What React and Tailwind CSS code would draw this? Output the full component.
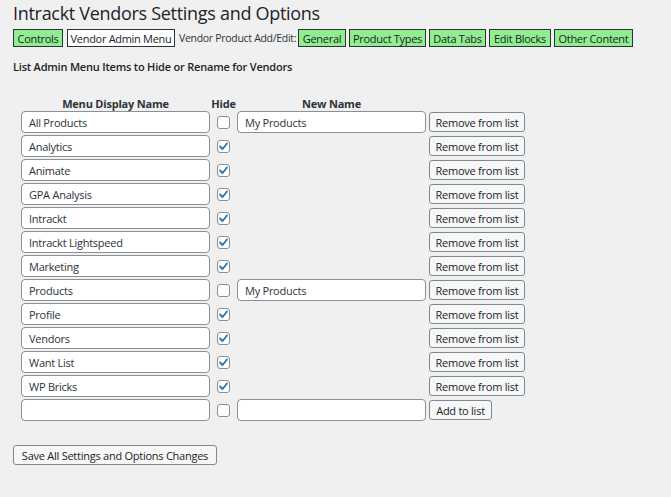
import React from "react";

const items = [
  { name: "All Products", hide: false, newName: "My Products" },
  { name: "Analytics", hide: true },
  { name: "Animate", hide: true },
  { name: "GPA Analysis", hide: true },
  { name: "Intrackt", hide: true },
  { name: "Intrackt Lightspeed", hide: true },
  { name: "Marketing", hide: true },
  { name: "Products", hide: false, newName: "My Products" },
  { name: "Profile", hide: true },
  { name: "Vendors", hide: true },
  { name: "Want List", hide: true },
  { name: "WP Bricks", hide: true },
];

function Checkbox({ checked }) {
  return (
    <div className="w-[13px] h-[13px] border border-[#8c8f94] rounded-[3px] bg-white flex items-center justify-center">
      {checked && (
        <svg width="11" height="11" viewBox="0 0 11 11">
          <path d="M2 5.5 L4.5 8 L9 2.5" fill="none" stroke="#2271b1" strokeWidth="1.8" strokeLinecap="round" strokeLinejoin="round" />
        </svg>
      )}
    </div>
  );
}

function TextInput({ value }) {
  return (
    <div className="w-[189px] h-[22px] border border-[#8c8f94] rounded-[4px] bg-white px-[7px] flex items-center text-[11px] tracking-[-0.25px] text-[#2c3338] leading-none">
      {value}
    </div>
  );
}

function Btn({ w, children }) {
  return (
    <div className={`${w} h-[20px] border border-[#7e8993] rounded-[3px] bg-[#f6f7f7] flex items-center justify-center text-[11px] tracking-[-0.25px] text-[#1d2327] leading-none whitespace-nowrap`}>
      {children}
    </div>
  );
}

function Tab({ w, white, children }) {
  return (
    <div
      className={`${w} h-[18px] border border-[#2c3338] flex items-center justify-center text-[11px] tracking-[-0.3px] text-[#1d2327] leading-none whitespace-nowrap ${white ? "bg-white" : "bg-[#90ee90]"}`}
    >
      {children}
    </div>
  );
}

export default function App() {
  return (
    <div
      className="min-h-[497px] w-full bg-[#f0f0f1] pl-[13px] pt-[2px]"
      style={{ fontFamily: '"Open Sans", "Noto Sans", sans-serif' }}
    >
      <h1 className="text-[18px] leading-[23px] tracking-[-0.3px] text-[#1d2327] font-normal">
        Intrackt Vendors Settings and Options
      </h1>
      <div className="flex items-center mt-[4px] h-[18px]">
        <Tab w="w-[50px]">Controls</Tab>
        <div className="w-[4px]" />
        <Tab w="w-[108px]" white>Vendor Admin Menu</Tab>
        <div className="w-[123px] pl-[4px] text-[10.5px] tracking-[-0.3px] text-[#2c3338] leading-none whitespace-nowrap">
          Vendor Product Add/Edit:
        </div>
        <Tab w="w-[48px]">General</Tab>
        <div className="w-[3px]" />
        <Tab w="w-[77px]">Product Types</Tab>
        <div className="w-[3px]" />
        <Tab w="w-[57px]">Data Tabs</Tab>
        <div className="w-[3px]" />
        <Tab w="w-[62px]">Edit Blocks</Tab>
        <div className="w-[3px]" />
        <Tab w="w-[79px]">Other Content</Tab>
      </div>
      <h2 className="mt-[12px] text-[11px] leading-[15px] tracking-[-0.2px] font-semibold text-[#1d2327]">
        List Admin Menu Items to Hide or Rename for Vendors
      </h2>
      <div className="pl-[8px] mt-[22px]">
        <div className="flex h-[14px] items-center text-[11px] tracking-[-0.2px] font-bold text-[#2c3338] leading-none">
          <div className="w-[189px] text-center">Menu Display Name</div>
          <div className="w-[27px] text-center">Hide</div>
          <div className="w-[189px] text-center">New Name</div>
        </div>
        <div className="flex flex-col gap-[2px] mt-[1px]">
          {items.map((it) => (
            <div key={it.name} className="flex items-center h-[22px]">
              <TextInput value={it.name} />
              <div className="w-[27px] flex justify-center">
                <Checkbox checked={it.hide} />
              </div>
              {it.newName ? <TextInput value={it.newName} /> : <div className="w-[189px]" />}
              <div className="w-[3px]" />
              <Btn w="w-[96px]">Remove from list</Btn>
            </div>
          ))}
          <div className="flex items-center h-[22px]">
            <TextInput value="" />
            <div className="w-[27px] flex justify-center">
              <Checkbox checked={false} />
            </div>
            <TextInput value="" />
            <div className="w-[3px]" />
            <Btn w="w-[63px]">Add to list</Btn>
          </div>
        </div>
      </div>
      <div className="mt-[24px]">
        <Btn w="w-[204px]">Save All Settings and Options Changes</Btn>
      </div>
    </div>
  );
}
